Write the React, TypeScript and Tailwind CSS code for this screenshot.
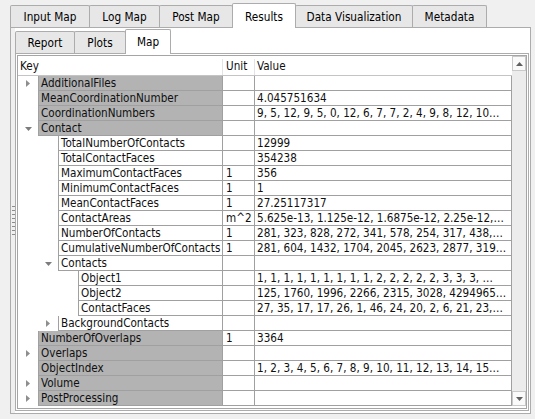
type Row = {
  d: 0 | 1 | 2
  k: string
  u?: string
  v?: string
  a?: 'open' | 'closed'
}

const rows: Row[] = [
  { d: 0, k: 'AdditionalFiles', a: 'closed' },
  { d: 0, k: 'MeanCoordinationNumber', v: '4.045751634' },
  { d: 0, k: 'CoordinationNumbers', v: '9, 5, 12, 9, 5, 0, 12, 6, 7, 7, 2, 4, 9, 8, 12, 10…' },
  { d: 0, k: 'Contact', a: 'open' },
  { d: 1, k: 'TotalNumberOfContacts', v: '12999' },
  { d: 1, k: 'TotalContactFaces', v: '354238' },
  { d: 1, k: 'MaximumContactFaces', u: '1', v: '356' },
  { d: 1, k: 'MinimumContactFaces', u: '1', v: '1' },
  { d: 1, k: 'MeanContactFaces', u: '1', v: '27.25117317' },
  { d: 1, k: 'ContactAreas', u: 'm^2', v: '5.625e-13, 1.125e-12, 1.6875e-12, 2.25e-12,…' },
  { d: 1, k: 'NumberOfContacts', u: '1', v: '281, 323, 828, 272, 341, 578, 254, 317, 438,…' },
  { d: 1, k: 'CumulativeNumberOfContacts', u: '1', v: '281, 604, 1432, 1704, 2045, 2623, 2877, 319…' },
  { d: 1, k: 'Contacts', a: 'open' },
  { d: 2, k: 'Object1', v: '1, 1, 1, 1, 1, 1, 1, 1, 1, 2, 2, 2, 2, 2, 3, 3, 3, …' },
  { d: 2, k: 'Object2', v: '125, 1760, 1996, 2266, 2315, 3028, 4294965…' },
  { d: 2, k: 'ContactFaces', v: '27, 35, 17, 17, 26, 1, 46, 24, 20, 2, 6, 21, 23,…' },
  { d: 1, k: 'BackgroundContacts', a: 'closed' },
  { d: 0, k: 'NumberOfOverlaps', u: '1', v: '3364' },
  { d: 0, k: 'Overlaps', a: 'closed' },
  { d: 0, k: 'ObjectIndex', v: '1, 2, 3, 4, 5, 6, 7, 8, 9, 10, 11, 12, 13, 14, 15…' },
  { d: 0, k: 'Volume', a: 'closed' },
  { d: 0, k: 'PostProcessing', a: 'closed' },
]

const indent = ['w-[20px]', 'w-[40px]', 'w-[60px]']

const outerTabs = [
  { label: 'Input Map', w: 'w-[80px]' },
  { label: 'Log Map', w: 'w-[71px]' },
  { label: 'Post Map', w: 'w-[74px]' },
  { label: 'Results', w: 'w-[64px]', active: true },
  { label: 'Data Visualization', w: 'w-[118px]' },
  { label: 'Metadata', w: 'w-[75px]' },
]

const innerTabs = [
  { label: 'Report', w: 'w-[60px]' },
  { label: 'Plots', w: 'w-[52px]' },
  { label: 'Map', w: 'w-[46px]', active: true },
]

function Arrow({ open }: { open: boolean }) {
  if (open) {
    return (
      <svg width="7" height="4" viewBox="0 0 7 4">
        <path d="M0 0H7L3.5 4Z" fill="#7c7c7c" />
      </svg>
    )
  }
  return (
    <svg width="4" height="7" viewBox="0 0 4 7">
      <path d="M0 0L4 3.5L0 7Z" fill="#8e8e8e" />
    </svg>
  )
}

function TreeRow({ row }: { row: Row }) {
  return (
    <div className="flex h-[15px] leading-[14px]">
      <div className="flex w-[205px] shrink-0">
        <div className={`${indent[row.d]} shrink-0 flex justify-end`}>
          <div className="w-[20px] flex items-center justify-center">
            {row.a && <Arrow open={row.a === 'open'} />}
          </div>
        </div>
        <div
          className={`flex-1 min-w-0 border-l border-r border-b border-[#a0a0a0] pl-[2px] whitespace-nowrap overflow-hidden ${
            row.d === 0 ? 'bg-[#b3b3b3]' : 'bg-white'
          }`}
        >
          {row.k}
        </div>
      </div>
      <div className="w-[32px] shrink-0 border-r border-b border-[#a0a0a0] pl-[3px]">{row.u}</div>
      <div className="w-[257px] shrink-0 border-r border-b border-[#a0a0a0] pl-[2px] whitespace-nowrap overflow-hidden">
        {row.v}
      </div>
    </div>
  )
}

export default function App() {
  return (
    <div className="w-[535px] h-[419px] bg-[#f0f0f0] pt-[3px] pl-[10px] font-['DejaVu_Sans_Condensed','Liberation_Sans',sans-serif] [font-stretch:condensed] text-[11.7px] text-black overflow-hidden">
      {/* outer tabs */}
      <div className="flex items-end h-[24px] relative z-10">
        {outerTabs.map((t, i) =>
          t.active ? (
            <div
              key={t.label}
              className={`${t.w} h-[25px] -mb-px ${i ? '-ml-px' : ''} bg-white border border-b-0 border-[#acacac] rounded-t-[2px] pt-[6px] text-center leading-[14px]`}
            >
              {t.label}
            </div>
          ) : (
            <div
              key={t.label}
              className={`${t.w} h-[22px] ${i ? '-ml-px' : ''} bg-[#e7e7e7] border border-b-0 border-[#acacac] rounded-t-[2px] pt-[4px] text-center leading-[14px]`}
            >
              {t.label}
            </div>
          ),
        )}
      </div>

      {/* outer pane */}
      <div className="w-[521px] h-[387px] border border-[#acacac] bg-white flex">
        {/* splitter handle */}
        <div className="w-[4px] shrink-0 bg-[#f0f0f0] flex flex-col items-center justify-center gap-[3px]">
          {Array.from({ length: 8 }).map((_, i) => (
            <div key={i} className="w-[3px] h-px bg-[#8c8c8c]" />
          ))}
        </div>

        {/* inner tab widget */}
        <div className="w-[514px] h-[383px] flex flex-col">
          <div className="flex items-end h-[25px] pt-px relative z-10">
            {innerTabs.map((t, i) =>
              t.active ? (
                <div
                  key={t.label}
                  className={`${t.w} h-[25px] -mb-px ${i ? '-ml-px' : ''} bg-white border border-b-0 border-[#acacac] rounded-t-[2px] pt-[5px] text-center leading-[14px]`}
                >
                  {t.label}
                </div>
              ) : (
                <div
                  key={t.label}
                  className={`${t.w} h-[22px] ${i ? '-ml-px' : ''} bg-[#e7e7e7] border border-b-0 border-[#acacac] rounded-t-[2px] pt-[4px] text-center leading-[14px]`}
                >
                  {t.label}
                </div>
              ),
            )}
          </div>

          <div className="h-[358px] border border-[#acacac] bg-white p-px">
            {/* tree view */}
            <div className="h-[354px] border border-[#a5a5a5] bg-white flex text-[11.6px] text-[#101010]">
              <div className="w-[494px] shrink-0">
                <div className="flex h-[20px] border-b border-[#c4c4c4] pt-[3px] leading-[14px]">
                  <div className="w-[205px] shrink-0 border-r border-[#e3e3e3] pl-[2px]">Key</div>
                  <div className="w-[32px] shrink-0 border-r border-[#e3e3e3] pl-[3px]">Unit</div>
                  <div className="flex-1 pl-[2px]">Value</div>
                </div>
                {rows.map((r) => (
                  <TreeRow key={r.k} row={r} />
                ))}
              </div>

              {/* scrollbar */}
              <div className="w-[14px] h-[350px] shrink-0 flex flex-col bg-[#ececec]">
                <div className="h-[15px] border border-[#c9c9c9] bg-[#fafafa] flex items-center justify-center">
                  <svg width="7" height="4" viewBox="0 0 7 4">
                    <path d="M0 4H7L3.5 0Z" fill="#606060" />
                  </svg>
                </div>
                <div className="flex-1" />
                <div className="h-[15px] border border-[#c9c9c9] bg-[#fafafa] flex items-center justify-center">
                  <svg width="7" height="4" viewBox="0 0 7 4">
                    <path d="M0 0H7L3.5 4Z" fill="#606060" />
                  </svg>
                </div>
              </div>
            </div>
          </div>
        </div>
      </div>
    </div>
  )
}
